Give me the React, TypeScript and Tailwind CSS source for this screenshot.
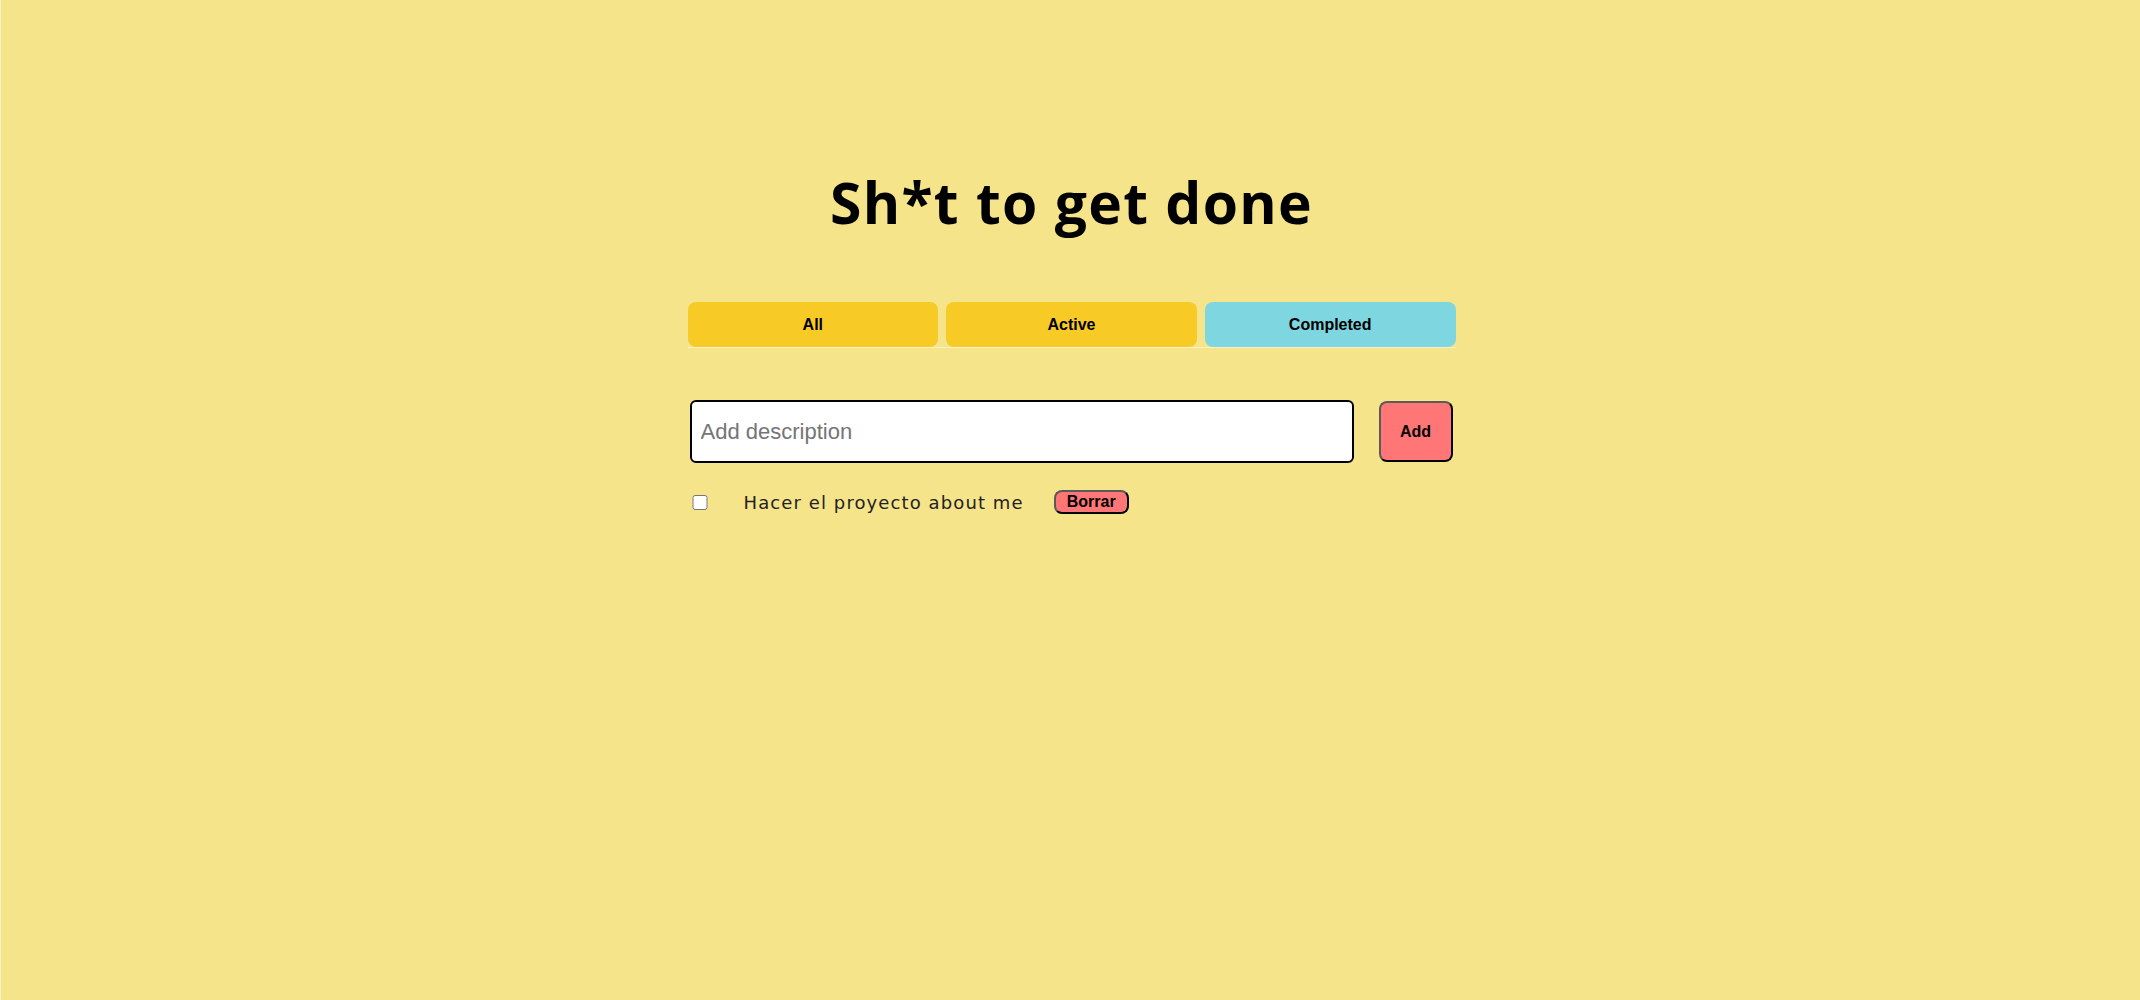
import React, { useState } from 'react';

type Todo = { id: number; text: string; done: boolean };

const App: React.FC = () => {
    const [filter, setFilter] = useState<'all' | 'active' | 'completed'>('completed');
    const [todos, setTodos] = useState<Todo[]>([{ id: 1, text: 'Hacer el proyecto about me', done: false }]);
    const [draft, setDraft] = useState('');

    const tabClass = (name: string) =>
        filter === name
            ? 'h-[45px] rounded-lg bg-[#7dd6e0] text-[16px] font-bold text-black'
            : 'h-[45px] rounded-lg bg-[#f8ca25] text-[16px] font-bold text-black';

    return (
        <div className="min-h-screen w-full bg-[#f6e48b] border-l border-[#fbf0c4] pt-[168px] pl-[2px] font-['Liberation_Sans',Arial,sans-serif]">
            <h1 className="text-center text-[57px] leading-[1.2] font-bold tracking-[1.3px] text-black font-['Open_Sans',sans-serif]">
                Sh*t to get done
            </h1>

            <div className="w-[768px] mx-auto mt-[66px]">
                <div className="grid grid-cols-3 gap-2 shadow-[0_1px_0_#fbf1c8]">
                    <button className={tabClass('all')} onClick={() => setFilter('all')}>All</button>
                    <button className={tabClass('active')} onClick={() => setFilter('active')}>Active</button>
                    <button className={tabClass('completed')} onClick={() => setFilter('completed')}>Completed</button>
                </div>

                <div className="flex items-center mt-[53px] ml-[2px]">
                    <input
                        value={draft}
                        onChange={(e) => setDraft(e.target.value)}
                        placeholder="Add description"
                        className="w-[664px] h-[63px] rounded-md border-2 border-black bg-white px-[9px] text-[22px] text-black placeholder:text-[#757575] outline-none"
                    />
                    <button
                        className="ml-[25px] w-[74px] h-[61px] rounded-lg border-2 border-t-[#5a5a5a] border-l-[#5a5a5a] border-b-black border-r-black bg-[#ff7676] text-[16px] font-bold text-black"
                        onClick={() => {
                            if (!draft.trim()) return;
                            setTodos([...todos, { id: Date.now(), text: draft, done: false }]);
                            setDraft('');
                        }}
                    >
                        Add
                    </button>
                </div>

                <ul className="mt-[27px] ml-[4px]">
                    {todos.map((t) => (
                        <li key={t.id} className="flex items-center h-[24px]">
                            <input
                                type="checkbox"
                                checked={t.done}
                                onChange={() => setTodos(todos.map((x) => (x.id === t.id ? { ...x, done: !x.done } : x)))}
                                className="w-[16px] h-[15px] m-0"
                            />
                            <span className="ml-[36px] text-[18px] tracking-[1.1px] text-[#222] font-['DejaVu_Sans',sans-serif]">{t.text}</span>
                            <button
                                className="ml-[30px] w-[75px] h-[24px] rounded-lg border-2 border-t-[#5a5a5a] border-l-[#5a5a5a] border-b-black border-r-black bg-[#ff7676] text-[16px] leading-none font-bold text-black"
                                onClick={() => setTodos(todos.filter((x) => x.id !== t.id))}
                            >
                                Borrar
                            </button>
                        </li>
                    ))}
                </ul>
            </div>
        </div>
    );
};

export default App;
